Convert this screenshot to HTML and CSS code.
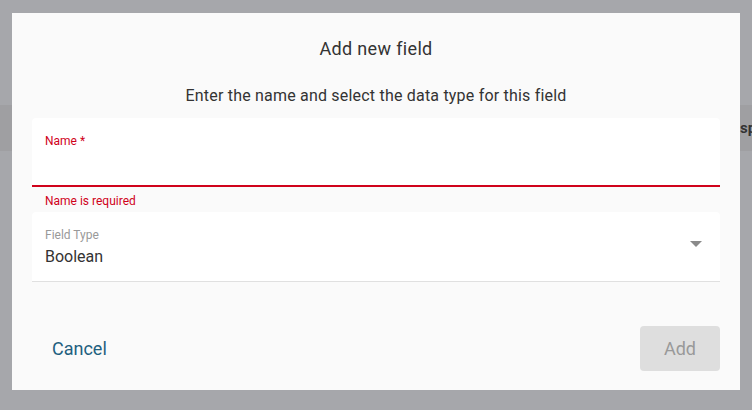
FILE: index.html
```html
<!DOCTYPE html>
<html lang="en">
<head>
<meta charset="utf-8">
<title>Add new field</title>
<link rel="stylesheet" href="styles.css">
</head>
<body>
<div class="backdrop">
  <div class="page-band"><span class="band-text">space</span></div>
</div>
<div class="dialog" role="dialog">
  <h1 class="dialog-title">Add new field</h1>
  <p class="dialog-sub">Enter the name and select the data type for this field</p>
  <div class="field field-error">
    <label class="field-label">Name *</label>
    <div class="field-input"></div>
  </div>
  <div class="helper">Name is required</div>
  <div class="field field-select">
    <div class="select-body">
      <label class="field-label muted">Field Type</label>
      <div class="field-value">Boolean</div>
    </div>
    <span class="caret"></span>
  </div>
  <div class="actions">
    <button class="btn-text">Cancel</button>
    <button class="btn-add" disabled>Add</button>
  </div>
</div>
</body>
</html>
```
FILE: styles.css
```css
html, body {
  margin: 0;
  padding: 0;
}
body {
  width: 752px;
  height: 410px;
  overflow: hidden;
  background: #a6a7ab;
  font-family: Roboto, "Liberation Sans", sans-serif;
  position: relative;
}
.backdrop {
  padding-top: 105px;
}
.page-band {
  height: 46px;
  background: #9f9fa2;
  white-space: nowrap;
  overflow: hidden;
  padding-left: 740px;
  box-sizing: border-box;
  display: flex;
  align-items: center;
}
.band-text {
  font-size: 15px;
  font-weight: 700;
  color: #333;
}
.dialog {
  position: absolute;
  left: 12px;
  top: 13px;
  width: 728px;
  height: 377px;
  box-sizing: border-box;
  background: #fafafa;
  padding: 0 20px;
  display: flex;
  flex-direction: column;
}
.dialog-title {
  margin: 0;
  padding-top: 24px;
  font-size: 18px;
  line-height: 24px;
  font-weight: 400;
  letter-spacing: 0.35px;
  color: #333;
  text-align: center;
}
.dialog-sub {
  margin: 24px 0 0;
  font-size: 16px;
  line-height: 22px;
  letter-spacing: 0.2px;
  color: #333;
  text-align: center;
}
.field {
  background: #fff;
  border-radius: 4px 4px 0 0;
  box-sizing: border-box;
  padding: 14px 13px 0;
}
.field-error {
  margin-top: 11px;
  height: 69px;
  border-bottom: 2px solid #d0021b;
}
.field-label {
  display: block;
  font-size: 12px;
  line-height: 16px;
  color: #d0021b;
  padding-top: 1px;
}
.field-label.muted {
  color: #999;
}
.helper {
  margin-top: 6px;
  padding-left: 13px;
  font-size: 12px;
  line-height: 16px;
  color: #d0021b;
}
.field-select {
  margin-top: 3px;
  height: 70px;
  border-bottom: 1px solid #e0e0e0;
  display: flex;
  align-items: flex-start;
  justify-content: space-between;
  padding-right: 18px;
}
.field-value {
  margin-top: 4px;
  font-size: 16px;
  line-height: 20px;
  color: #333;
}
.caret {
  margin-top: 15px;
  width: 0;
  height: 0;
  border-left: 6px solid transparent;
  border-right: 6px solid transparent;
  border-top: 6px solid #8a8a8a;
}
.actions {
  margin-top: 44px;
  display: flex;
  justify-content: space-between;
  align-items: center;
}
button {
  font-family: inherit;
  font-size: 18px;
  border: none;
  cursor: pointer;
}
.btn-text {
  background: transparent;
  color: #1f5f7f;
  padding: 0 20px;
  height: 45px;
  line-height: 45px;
}
.btn-add {
  width: 80px;
  height: 45px;
  border-radius: 4px;
  background: #dedede;
  color: #999;
}
```
